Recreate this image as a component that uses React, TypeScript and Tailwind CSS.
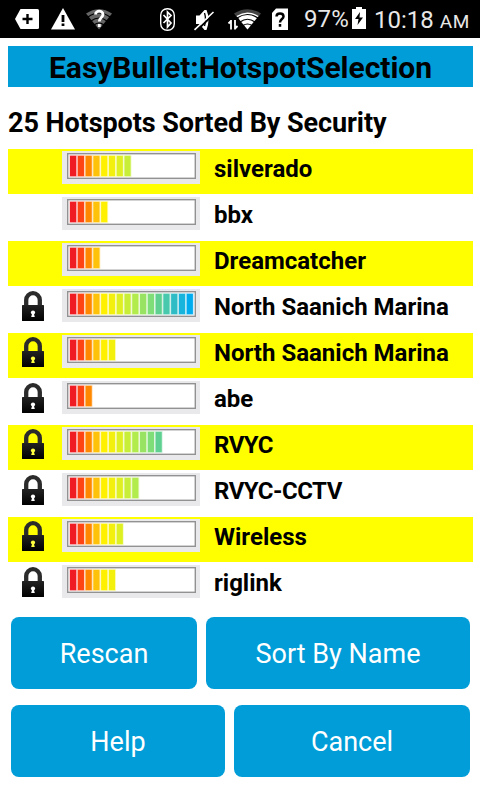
import { useState } from "react";

type Hotspot = {
  name: string;
  bars: number;
  locked: boolean;
};

const hotspots: Hotspot[] = [
  { name: "silverado", bars: 8, locked: false },
  { name: "bbx", bars: 5, locked: false },
  { name: "Dreamcatcher", bars: 4, locked: false },
  { name: "North Saanich Marina", bars: 16, locked: true },
  { name: "North Saanich Marina", bars: 6, locked: true },
  { name: "abe", bars: 3, locked: true },
  { name: "RVYC", bars: 12, locked: true },
  { name: "RVYC-CCTV", bars: 9, locked: true },
  { name: "Wireless", bars: 7, locked: true },
  { name: "riglink", bars: 6, locked: true },
];

// weakest to strongest
const barColors = [
  "#f01c24", "#ff4414", "#ff8800", "#ffc20a", "#fff000", "#f2f00c", "#def022", "#c8ee38",
  "#b2ec4c", "#98e462", "#80de78", "#60d090", "#48c8ac", "#30bcc4", "#18b4dc", "#00acee",
];

function SignalMeter({ bars }: { bars: number }) {
  return (
    <svg className="mt-[2px] h-[33px] w-[138px] shrink-0" viewBox="0 0 138 33">
      <rect width="138" height="33" fill="#e9e9ec" />
      <rect x="5.7" y="2.7" width="127.6" height="24.6" fill="#fff" stroke="#929292" strokeWidth="1.4" />
      {barColors.slice(0, bars).map((color, i) => (
        <g key={i}>
          <rect x={7.3 + i * 7.78} y="4" width="7.8" height="22" fill={color} opacity="0.25" />
          <rect x={8 + i * 7.78} y="4.8" width="6.2" height="20.4" fill={color} />
        </g>
      ))}
    </svg>
  );
}

function Padlock({ keyhole }: { keyhole: string }) {
  return (
    <svg className="mt-1 h-[30px] w-[22px]" viewBox="0 0 22 30">
      <defs>
        <linearGradient id="lock" x1="0" y1="0" x2="0" y2="1">
          <stop offset="0" stopColor="#222" />
          <stop offset="1" stopColor="#000" />
        </linearGradient>
      </defs>
      <path d="M4.200 15V9a6.800 6.800 0 0 1 13.600 0v6" fill="none" stroke="#2b2b2b" strokeWidth="4.300" />
      <rect y="14" width="22" height="16" rx="0.5" fill="url(#lock)" />
      <circle cx="11" cy="21.500" r="2.100" fill={keyhole} />
      <path d="M10.300 22h1.400l1.100 4h-3.600z" fill={keyhole} />
    </svg>
  );
}

function StatusBar() {
  return (
    <div className="flex h-[38px] items-center bg-black text-white">
      <svg className="h-[38px] w-[300px] shrink-0" viewBox="0 0 300 38">
        {/* plus tag */}
        <path d="M20.500 9H37.500Q39 9 39 10.500V27.500Q39 29 37.500 29H20.500L15 19z" fill="#fff" />
        <path d="M27.500 14v10M22.500 19h10" stroke="#000" strokeWidth="2.400" />
        {/* warning */}
        <path d="M63 8L75 29.500H51z" fill="#fff" />
        <path d="M63 15v7M63 23.500v2.500" stroke="#000" strokeWidth="2.800" />
        {/* unknown wifi */}
        <path d="M99 29.500L86 13.500Q99 5 112 13.500z" fill="#666" />
        <path d="M88 17q11-8 22 0M91 21q8-6 16 0M94 25q5-4 10 0" fill="none" stroke="#000" strokeWidth="1.200" />
        <path d="M95.500 14.500C95.500 10 103 10 103 14.500C103 17.500 99.300 17.500 99.300 21.500M99.300 24v3" fill="none" stroke="#fff" strokeWidth="2.800" />
        {/* bluetooth */}
        <rect x="160.700" y="8.700" width="13.600" height="21.600" rx="6.500" fill="none" stroke="#fff" strokeWidth="1.400" />
        <path d="M163.500 15L171 23l-3.500 4V12l3.500 3.500-7.500 7.500" fill="none" stroke="#fff" strokeWidth="1.700" />
        {/* muted speaker */}
        <path d="M196 15.500h3.500l5-5.500h2q4 9 0 20h-2l-5-6H196z" fill="#fff" />
        <path d="M204.500 13q2 6 0 13" fill="none" stroke="#000" strokeWidth="1.300" />
        <path d="M195.500 31.500L214 14" stroke="#000" strokeWidth="2" />
        <path d="M194.500 29.800L213.500 12" stroke="#fff" strokeWidth="1.600" />
        {/* wifi with traffic arrows */}
        <path d="M247.500 29.500L234 13.500Q247.500 5 261 13.500z" fill="#444" />
        <path d="M247.500 29.500L236.500 16Q247.500 9 258.500 16z" fill="#fff" />
        <path d="M237 18q10.500-7 21 0M240 22q7.500-5.500 15 0M243 25.500q4.500-3 9 0" fill="none" stroke="#000" strokeWidth="1.200" />
        <path d="M227 18h11.500v12H227z" fill="#000" />
        <path d="M231 20v9.500M228.500 23.500l2.500-2.500M235 20v9.500M235 28.500l2.500-2.500" stroke="#fff" strokeWidth="1.800" fill="none" />
        {/* sim card */}
        <path d="M276 8.500h12V30h-16V13z" fill="#fff" />
        <path d="M276.500 16.500C276.500 12.500 283.500 12.500 283.500 16.500C283.500 19 280 19 280 22.500M280 24v2.800" fill="none" stroke="#000" strokeWidth="2.500" />
      </svg>
      <span className="ml-1 w-[48px] whitespace-nowrap text-[24px] tracking-[0.1px] text-[#e8e8e8]">97%</span>
      <svg className="mb-[2px] h-[22px] w-[14px] shrink-0" viewBox="0 0 14 22">
        <path d="M4 0h6v2h4v20H0V2h4z" fill="#fff" />
        <path d="M8 5L3 12h3.500L5.500 18L11 10.500H7.500z" fill="#000" />
      </svg>
      <span className="ml-2 pt-px whitespace-nowrap text-[24px] text-[#e8e8e8]">
        10:18 <span className="text-[19px] tracking-[0.7px]">AM</span>
      </span>
    </div>
  );
}

const buttonStyle = "h-[72px] rounded-lg bg-[#009dd8] pt-[3px] text-[27px] text-white";

export default function App() {
  const [selected, setSelected] = useState<number | null>(null);

  return (
    <div className="h-[800px] w-[480px] overflow-hidden bg-white font-[Roboto,sans-serif] text-black">
      <StatusBar />

      <h1 className="mt-2 ml-2 h-[41px] w-[465px] bg-[#009dd8] text-center text-[30px] leading-[44px] font-bold tracking-[-0.04px]">
        EasyBullet:HotspotSelection
      </h1>
      <h2 className="mt-4 ml-2 h-[46px] text-[27px] leading-[40px] font-bold tracking-[-0.08px] whitespace-nowrap">
        25 Hotspots Sorted By Security
      </h2>

      <ul className="ml-2 flex w-[465px] flex-col gap-px">
        {hotspots.map((spot, i) => (
          <li
            key={i}
            onClick={() => setSelected(i)}
            aria-selected={selected === i}
            className={`flex h-[45px] cursor-pointer ${i % 2 === 0 ? "bg-[#ffff00]" : "bg-white"}`}
          >
            <div className="w-[54px] shrink-0 pl-[14px]">
              {spot.locked && <Padlock keyhole={i % 2 === 0 ? "#ffff40" : "#fff"} />}
            </div>
            <SignalMeter bars={spot.bars} />
            <span
              className={`ml-[14px] text-[24px] leading-[40px] font-bold whitespace-nowrap ${
                spot.name === spot.name.toUpperCase() ? "tracking-[-0.5px]" : ""
              }`}
            >
              {spot.name}
            </span>
          </li>
        ))}
      </ul>

      <div className="mt-[9px] ml-[11px] flex gap-[9px]">
        <button className={`w-[186px] ${buttonStyle}`}>Rescan</button>
        <button className={`w-[264px] ${buttonStyle}`}>Sort By Name</button>
      </div>
      <div className="mt-4 ml-[11px] flex gap-[9px]">
        <button className={`w-[214px] ${buttonStyle}`}>Help</button>
        <button className={`w-[236px] ${buttonStyle}`}>Cancel</button>
      </div>
    </div>
  );
}
